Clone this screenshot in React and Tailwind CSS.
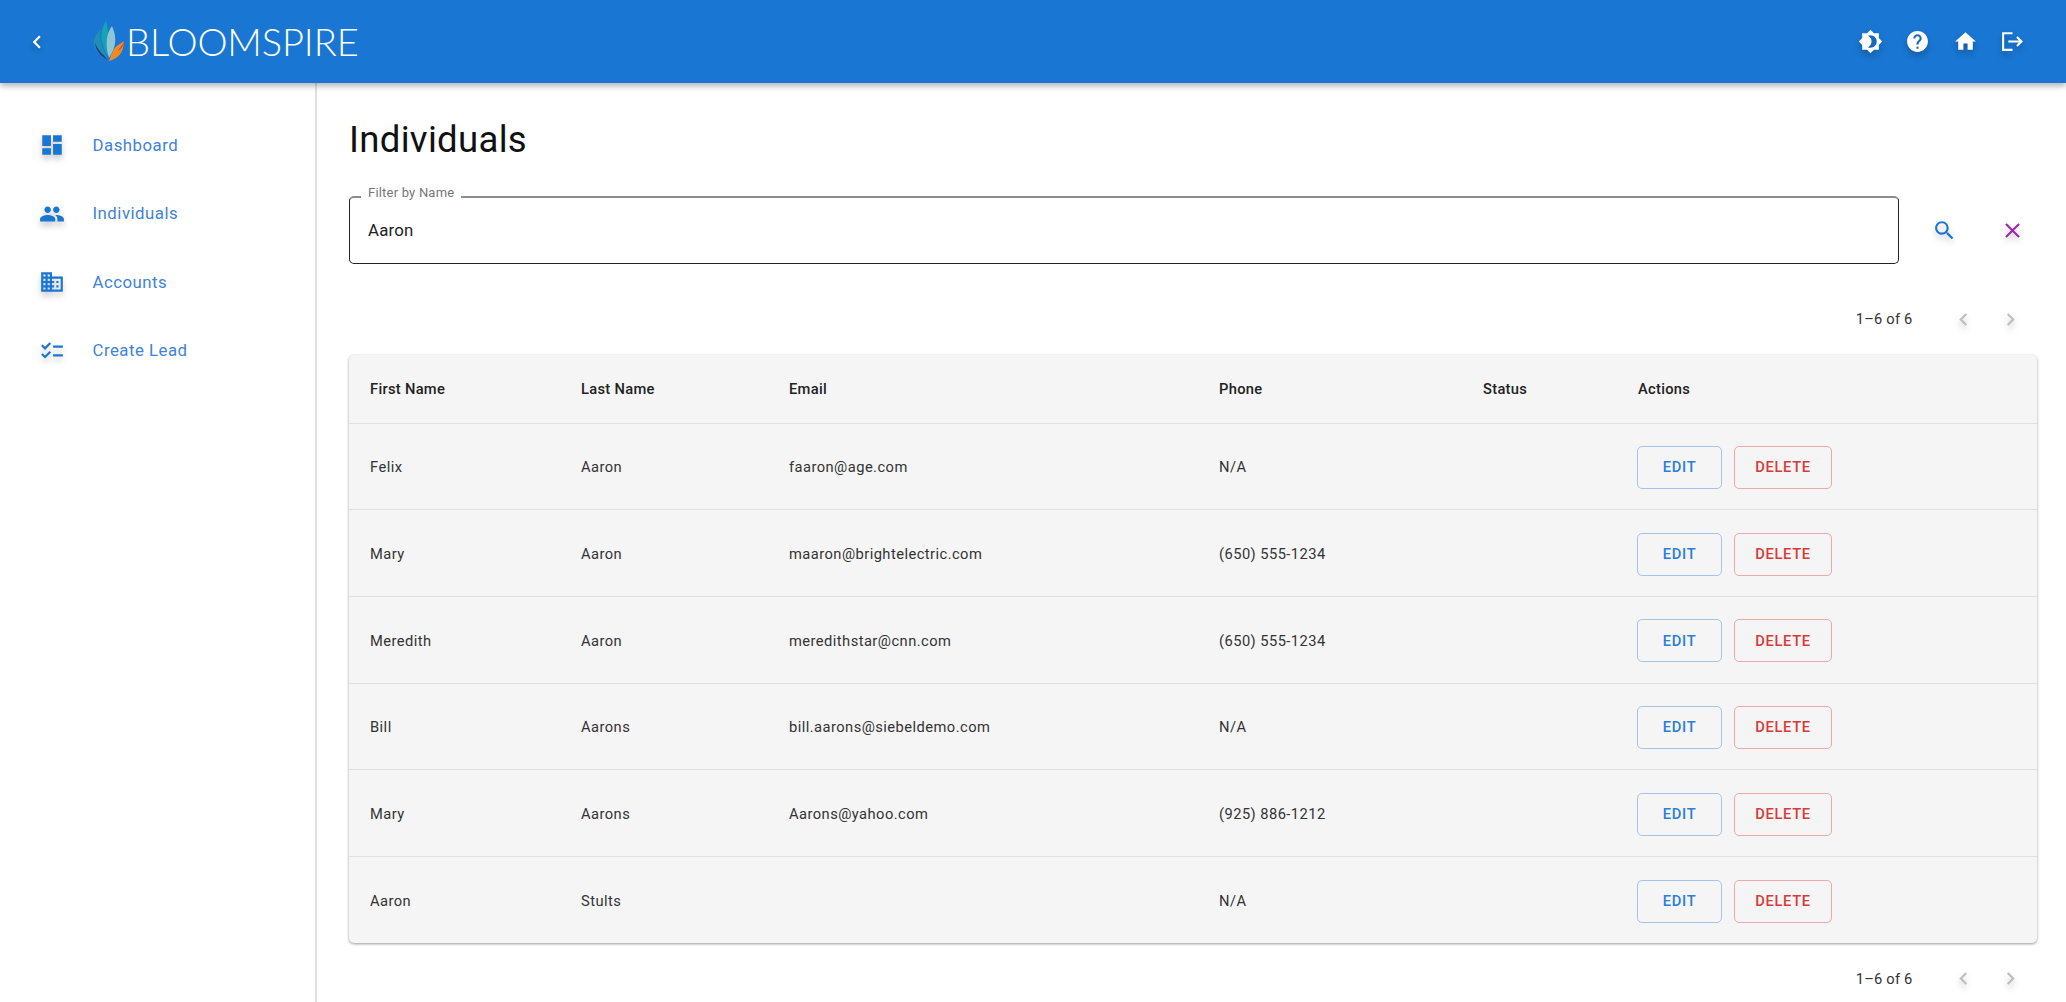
const P = {
  back: "M15.41 7.41L14 6l-6 6 6 6 1.41-1.41L10.83 12z",
  next: "M10 6L8.59 7.41 13.17 12l-4.58 4.58L10 18l6-6z",
  dash: "M3 13h8V3H3v10zm0 8h8v-6H3v6zm10 0h8V11h-8v10zm0-18v6h8V3h-8z",
  people: "M16 11c1.66 0 2.99-1.34 2.99-3S17.66 5 16 5c-1.66 0-3 1.34-3 3s1.34 3 3 3zm-8 0c1.66 0 2.99-1.34 2.99-3S9.66 5 8 5C6.34 5 5 6.34 5 8s1.34 3 3 3zm0 2c-2.33 0-7 1.17-7 3.5V19h14v-2.5c0-2.33-4.67-3.5-7-3.5zm8 0c-.29 0-.62.02-.97.05 1.16.84 1.97 1.97 1.97 3.45V19h6v-2.5c0-2.33-4.67-3.5-7-3.5z",
  biz: "M12 7V3H2v18h20V7H12zM6 19H4v-2h2v2zm0-4H4v-2h2v2zm0-4H4V9h2v2zm0-4H4V5h2v2zm4 12H8v-2h2v2zm0-4H8v-2h2v2zm0-4H8V9h2v2zm0-4H8V5h2v2zm10 12h-8v-2h2v-2h-2v-2h2v-2h-2V9h8v10zm-2-8h-2v2h2v-2zm0 4h-2v2h2v-2z",
  check: "M22 7h-9v2h9V7zm0 8h-9v2h9v-2zM5.54 11 2 7.46l1.41-1.41 2.12 2.12 4.24-4.24 1.41 1.41L5.54 11zm0 8L2 15.46l1.41-1.41 2.12 2.12 4.24-4.24 1.41 1.41L5.54 19z",
  bright: "M20 8.69V4h-4.69L12 .69 8.69 4H4v4.69L.69 12 4 15.31V20h4.69L12 23.31 15.31 20H20v-4.69L23.31 12 20 8.69zM12 18c-.89 0-1.74-.2-2.5-.55C11.56 16.5 13 14.42 13 12s-1.44-4.5-3.5-5.45C10.26 6.2 11.11 6 12 6c3.31 0 6 2.69 6 6s-2.69 6-6 6z",
  help: "M12 2C6.48 2 2 6.48 2 12s4.48 10 10 10 10-4.48 10-10S17.52 2 12 2zm1 17h-2v-2h2v2zm2.07-7.75l-.9.92C13.45 12.9 13 13.5 13 15h-2v-.5c0-1.1.45-2.1 1.17-2.83l1.24-1.26c.37-.36.59-.86.59-1.41 0-1.1-.9-2-2-2s-2 .9-2 2H8c0-2.21 1.79-4 4-4s4 1.79 4 4c0 .88-.36 1.68-.93 2.25z",
  home: "M10 20v-6h4v6h5v-8h3L12 3 2 12h3v8z",
  logout: "M17 7l-1.41 1.41L18.17 11H8v2h10.17l-2.58 2.58L17 17l5-5zM4 5h8V3H4v16h8v2H2V3h2z",
  search: "M15.5 14h-.79l-.28-.27C15.41 12.59 16 11.11 16 9.5 16 5.91 13.09 3 9.5 3S3 5.91 3 9.5 5.91 16 9.5 16c1.61 0 3.09-.59 4.23-1.57l.27.28v.79l5 4.99L20.49 19l-4.99-5zm-6 0C7.01 14 5 11.99 5 9.5S7.01 5 9.5 5 14 7.01 14 9.5 11.99 14 9.5 14z",
  close: "M19 6.41L17.59 5 12 10.59 6.41 5 5 6.41 10.59 12 5 17.59 6.41 19 12 13.41 17.59 19 19 17.59 13.41 12z",
};

function Icon({ d, className }) {
  return (
    <svg viewBox="0 0 24 24" fill="currentColor" className={"w-[25px] h-[25px] shrink-0 drop-shadow-[0_4px_3px_rgba(0,0,0,0.22)] " + className}>
      <path d={d} />
    </svg>
  );
}

function Logo() {
  return (
    <svg viewBox="0 0 32 40" className="w-[32px] h-[40px] shrink-0 -mt-[2px]">
      <path d="M8 8 C2 13 0 20 1 24 C3 32 9 36 15 39 C12 30 5 22 8 8Z" fill="#1f8fb5" />
      <path d="M2 22 C3 31 9 36 15 39 C11 34 5 30 2 22Z" fill="#283a7e" />
      <path d="M13 0 C8 8 7 16 10 24 C11 28 13 32 15 36 C15 26 17 14 13 0Z" fill="#16a3b5" />
      <path d="M19 5 C13 13 12 24 16 37 C22 28 25 18 19 5Z" fill="#8fc6d6" />
      <path d="M31 20 C27 23 22 25 20 30 C18 34 17 37 16 40 C25 38 31 31 31 20Z" fill="#f08a24" />
      <path d="M31 20 C30 24 27 26 25 30 C28 28 31 25 31 20Z" fill="#d8412e" />
    </svg>
  );
}

const nav = [
  ["Dashboard", P.dash],
  ["Individuals", P.people],
  ["Accounts", P.biz],
  ["Create Lead", P.check],
];

const rows = [
  ["Felix", "Aaron", "faaron@age.com", "N/A"],
  ["Mary", "Aaron", "maaron@brightelectric.com", "(650) 555-1234"],
  ["Meredith", "Aaron", "meredithstar@cnn.com", "(650) 555-1234"],
  ["Bill", "Aarons", "bill.aarons@siebeldemo.com", "N/A"],
  ["Mary", "Aarons", "Aarons@yahoo.com", "(925) 886-1212"],
  ["Aaron", "Stults", "", "N/A"],
];

const heads = ["First Name", "Last Name", "Email", "Phone", "Status", "Actions"];

function Pager({ className }) {
  return (
    <div className={"flex items-center justify-end text-[14.7px] tracking-[0.2px] text-[#333] " + className}>
      <span className="mr-[38px]">1–6 of 6</span>
      <Icon d={P.back} className="text-[#bdbdbd] mr-[22.5px]" />
      <Icon d={P.next} className="text-[#bdbdbd] mr-[14px]" />
    </div>
  );
}

export default function App() {
  return (
    <div className="h-screen overflow-hidden flex flex-col bg-white font-['Roboto',sans-serif]">
      <header className="relative z-10 h-[83px] shrink-0 bg-[#1976d2] text-white flex items-center shadow-[0_3px_6px_rgba(0,0,0,0.3)]">
        <Icon d={P.back} className="ml-[24px] mr-[32px] w-[26px] h-[26px]" />
        <div className="ml-[11px] flex items-center">
          <Logo />
          <span className="ml-[1px] -mt-[1px] font-['Lato',sans-serif] font-light text-[38px] leading-none tracking-[-0.1px]">BLOOMSPIRE</span>
        </div>
        <div className="ml-auto flex items-center gap-[22.5px] mr-[41px]">
          <Icon d={P.bright} />
          <Icon d={P.help} />
          <Icon d={P.home} />
          <Icon d={P.logout} />
        </div>
      </header>
      <div className="flex flex-1 min-h-0">
        <aside className="w-[317px] shrink-0 border-r-2 border-[#e0e0e0] pt-[28px]">
          {nav.map(([label, d]) => (
            <div key={label} className="h-[68.5px] flex items-center pl-[39px] text-[#1976d2]">
              <Icon d={d} className="w-[26px] h-[26px]" />
              <span className="ml-[27.5px] text-[16.8px] tracking-[0.5px] text-[#3f82d8]">{label}</span>
            </div>
          ))}
        </aside>
        <main className="flex-1 min-w-0 pl-[32px] pr-[29px]">
          <h1 className="mt-[32px] h-[50px] flex items-center text-[36.6px] font-normal text-[#111] tracking-[0.3px]">Individuals</h1>
          <div className="mt-[31px] flex items-center">
            <fieldset className="relative w-[1550px] h-[74px] -mt-[6px] border-[1.5px] border-[#222] border-t-[2px] border-t-[#8c8c8c] rounded-[5px] px-[11px]">
              <legend className="px-[7px] ml-0 text-[13px] leading-[13px] text-[#777] tracking-[0.2px] relative -top-[4px]">Filter by Name</legend>
              <div className="pl-[7px] mt-[15px] text-[16.8px] text-[#222] tracking-[0.2px]">Aaron</div>
            </fieldset>
            <Icon d={P.search} className="ml-[33px] text-[#1976d2]" />
            <Icon d={P.close} className="ml-[43px] text-[#9c27b0]" />
          </div>
          <Pager className="h-[25px] mt-[43px]" />
          <div className="mt-[23px] bg-[#f5f5f5] rounded-[5px] shadow-[0_1px_3px_rgba(0,0,0,0.4)]">
            <table className="w-full table-fixed border-collapse text-[14.7px] tracking-[0.45px] text-[#333]">
              <colgroup>
                <col className="w-[211px]" />
                <col className="w-[208px]" />
                <col className="w-[430px]" />
                <col className="w-[264px]" />
                <col className="w-[155px]" />
                <col />
              </colgroup>
              <thead>
                <tr className="h-[68px] border-b-[1.5px] border-[#e0e0e0]">
                  {heads.map((h) => (
                    <th key={h} className="pl-[21px] text-left font-medium text-[#222] tracking-[0.3px]">{h}</th>
                  ))}
                </tr>
              </thead>
              <tbody>
                {rows.map((r, i) => (
                  <tr key={i} className={"h-[86.7px] " + (i < rows.length - 1 ? "border-b-[1.5px] border-[#e0e0e0]" : "")}>
                    {r.map((c, j) => (
                      <td key={j} className="pl-[21px] pt-[2px]">{c}</td>
                    ))}
                    <td className="pl-[21px]" />
                    <td className="pl-[20px] pt-[2px]">
                      <div className="flex gap-[12px]">
                        <button className="w-[85px] h-[43px] rounded-[5px] border-[1.5px] border-[#a3c4ec] text-[#2a7fd6] font-medium text-[14.7px] tracking-[0.7px]">EDIT</button>
                        <button className="w-[98px] h-[43px] rounded-[5px] border-[1.5px] border-[#eba9a9] text-[#d83a3a] font-medium text-[14.7px] tracking-[0.7px]">DELETE</button>
                      </div>
                    </td>
                  </tr>
                ))}
              </tbody>
            </table>
          </div>
          <Pager className="h-[25px] mt-[23px]" />
        </main>
      </div>
    </div>
  );
}
